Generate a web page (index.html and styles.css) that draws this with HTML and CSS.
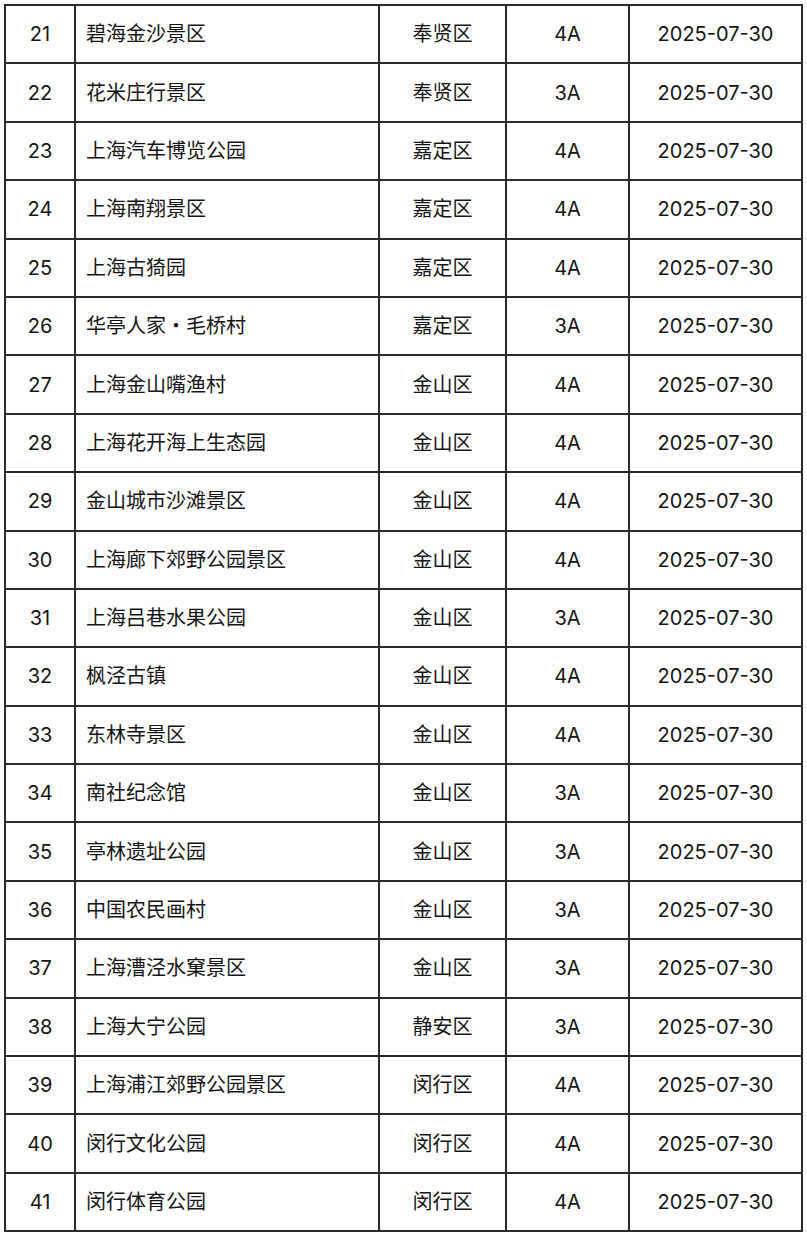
FILE: index.html
```html
<!DOCTYPE html>
<html lang="zh">
<head>
<meta charset="utf-8">
<link rel="stylesheet" href="styles.css">
</head>
<body>
<table class="list">
<colgroup>
<col class="c-no"><col class="c-name"><col class="c-area"><col class="c-level"><col class="c-date">
</colgroup>
<tbody>
<tr><td class="no">21</td><td class="name">碧海金沙景区</td><td>奉贤区</td><td>4A</td><td>2025-07-30</td></tr>
<tr><td class="no">22</td><td class="name">花米庄行景区</td><td>奉贤区</td><td>3A</td><td>2025-07-30</td></tr>
<tr><td class="no">23</td><td class="name">上海汽车博览公园</td><td>嘉定区</td><td>4A</td><td>2025-07-30</td></tr>
<tr><td class="no">24</td><td class="name">上海南翔景区</td><td>嘉定区</td><td>4A</td><td>2025-07-30</td></tr>
<tr><td class="no">25</td><td class="name">上海古猗园</td><td>嘉定区</td><td>4A</td><td>2025-07-30</td></tr>
<tr><td class="no">26</td><td class="name">华亭人家・毛桥村</td><td>嘉定区</td><td>3A</td><td>2025-07-30</td></tr>
<tr><td class="no">27</td><td class="name">上海金山嘴渔村</td><td>金山区</td><td>4A</td><td>2025-07-30</td></tr>
<tr><td class="no">28</td><td class="name">上海花开海上生态园</td><td>金山区</td><td>4A</td><td>2025-07-30</td></tr>
<tr><td class="no">29</td><td class="name">金山城市沙滩景区</td><td>金山区</td><td>4A</td><td>2025-07-30</td></tr>
<tr><td class="no">30</td><td class="name">上海廊下郊野公园景区</td><td>金山区</td><td>4A</td><td>2025-07-30</td></tr>
<tr><td class="no">31</td><td class="name">上海吕巷水果公园</td><td>金山区</td><td>3A</td><td>2025-07-30</td></tr>
<tr><td class="no">32</td><td class="name">枫泾古镇</td><td>金山区</td><td>4A</td><td>2025-07-30</td></tr>
<tr><td class="no">33</td><td class="name">东林寺景区</td><td>金山区</td><td>4A</td><td>2025-07-30</td></tr>
<tr><td class="no">34</td><td class="name">南社纪念馆</td><td>金山区</td><td>3A</td><td>2025-07-30</td></tr>
<tr><td class="no">35</td><td class="name">亭林遗址公园</td><td>金山区</td><td>3A</td><td>2025-07-30</td></tr>
<tr><td class="no">36</td><td class="name">中国农民画村</td><td>金山区</td><td>3A</td><td>2025-07-30</td></tr>
<tr><td class="no">37</td><td class="name">上海漕泾水窠景区</td><td>金山区</td><td>3A</td><td>2025-07-30</td></tr>
<tr><td class="no">38</td><td class="name">上海大宁公园</td><td>静安区</td><td>3A</td><td>2025-07-30</td></tr>
<tr><td class="no">39</td><td class="name">上海浦江郊野公园景区</td><td>闵行区</td><td>4A</td><td>2025-07-30</td></tr>
<tr><td class="no">40</td><td class="name">闵行文化公园</td><td>闵行区</td><td>4A</td><td>2025-07-30</td></tr>
<tr><td class="no">41</td><td class="name">闵行体育公园</td><td>闵行区</td><td>4A</td><td>2025-07-30</td></tr>
</tbody>
</table>
</body>
</html>
```

FILE: styles.css
```css
html, body {
  margin: 0;
  padding: 0;
  background: #ffffff;
}
body {
  padding: 4px 0 0 4px;
  font-family: Inter, "Noto Sans CJK SC", sans-serif;
  color: #141414;
}
.list {
  border-collapse: collapse;
  table-layout: fixed;
  width: 797px;
  font-size: 20px;
}
.c-no { width: 70px; }
.c-name { width: 304px; }
.c-area { width: 127px; }
.c-level { width: 123px; }
.c-date { width: 173px; }
.list td {
  border: 2px solid #2b2b2b;
  height: 56.4px;
  padding: 0;
  text-align: center;
  vertical-align: middle;
  white-space: nowrap;
  line-height: 1;
}
.list td.name {
  text-align: left;
  padding-left: 10px;
}
```
